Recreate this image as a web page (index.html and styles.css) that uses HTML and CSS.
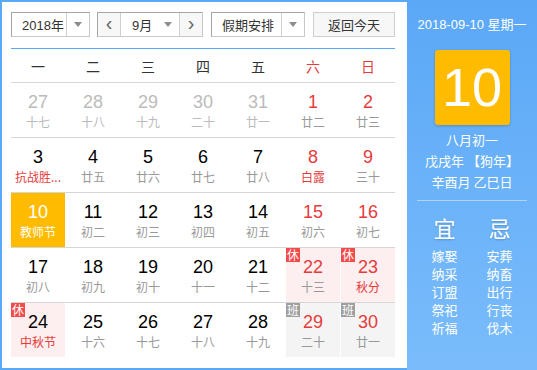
FILE: index.html
```html
<!DOCTYPE html>
<html lang="zh">
<head>
<meta charset="utf-8">
<link rel="stylesheet" href="styles.css">
</head>
<body>
<div class="cal">
  <div class="main">
    <div class="bar">
      <div class="sel sel-year"><span class="sel-text">2018年</span><span class="sel-drop"><i class="tri"></i></span></div>
      <div class="month">
        <span class="arrow">&lsaquo;</span>
        <div class="sel sel-month"><span class="sel-text">9月</span><span class="sel-drop2"><i class="tri"></i></span></div>
        <span class="arrow">&rsaquo;</span>
      </div>
      <div class="sel sel-hol"><span class="sel-text">假期安排</span><span class="sel-drop"><i class="tri"></i></span></div>
      <button class="today">返回今天</button>
    </div>
    <div class="week">
      <span>一</span><span>二</span><span>三</span><span>四</span><span>五</span><span class="red">六</span><span class="red">日</span>
    </div>
    <div class="row">
      <div class="cell other"><b>27</b><i>十七</i></div>
      <div class="cell other"><b>28</b><i>十八</i></div>
      <div class="cell other"><b>29</b><i>十九</i></div>
      <div class="cell other"><b>30</b><i>二十</i></div>
      <div class="cell other"><b>31</b><i>廿一</i></div>
      <div class="cell wk"><b>1</b><i>廿二</i></div>
      <div class="cell wk"><b>2</b><i>廿三</i></div>
    </div>
    <div class="row">
      <div class="cell fest"><b>3</b><i>抗战胜...</i></div>
      <div class="cell"><b>4</b><i>廿五</i></div>
      <div class="cell"><b>5</b><i>廿六</i></div>
      <div class="cell"><b>6</b><i>廿七</i></div>
      <div class="cell"><b>7</b><i>廿八</i></div>
      <div class="cell wk fest"><b>8</b><i>白露</i></div>
      <div class="cell wk"><b>9</b><i>三十</i></div>
    </div>
    <div class="row">
      <div class="cell cur"><b>10</b><i>教师节</i></div>
      <div class="cell"><b>11</b><i>初二</i></div>
      <div class="cell"><b>12</b><i>初三</i></div>
      <div class="cell"><b>13</b><i>初四</i></div>
      <div class="cell"><b>14</b><i>初五</i></div>
      <div class="cell wk"><b>15</b><i>初六</i></div>
      <div class="cell wk"><b>16</b><i>初七</i></div>
    </div>
    <div class="row">
      <div class="cell"><b>17</b><i>初八</i></div>
      <div class="cell"><b>18</b><i>初九</i></div>
      <div class="cell"><b>19</b><i>初十</i></div>
      <div class="cell"><b>20</b><i>十一</i></div>
      <div class="cell"><b>21</b><i>十二</i></div>
      <div class="cell wk rest"><em class="tag">休</em><b>22</b><i>十三</i></div>
      <div class="cell wk rest fest"><em class="tag">休</em><b>23</b><i>秋分</i></div>
    </div>
    <div class="row last">
      <div class="cell rest fest"><em class="tag">休</em><b>24</b><i>中秋节</i></div>
      <div class="cell"><b>25</b><i>十六</i></div>
      <div class="cell"><b>26</b><i>十七</i></div>
      <div class="cell"><b>27</b><i>十八</i></div>
      <div class="cell"><b>28</b><i>十九</i></div>
      <div class="cell wk work"><em class="tag">班</em><b>29</b><i>二十</i></div>
      <div class="cell wk work"><em class="tag">班</em><b>30</b><i>廿一</i></div>
    </div>
  </div>
  <div class="side">
    <div class="side-date">2018-09-10 星期一</div>
    <div class="big">10</div>
    <div class="lunar">
      <div>八月初一</div>
      <div>戊戌年 【狗年】</div>
      <div>辛酉月 乙巳日</div>
    </div>
    <div class="sep"></div>
    <div class="yiji">
      <div class="col">
        <div class="head">宜</div>
        <div>嫁娶</div><div>纳采</div><div>订盟</div><div>祭祀</div><div>祈福</div>
      </div>
      <div class="col">
        <div class="head">忌</div>
        <div>安葬</div><div>纳畜</div><div>出行</div><div>行丧</div><div>伐木</div>
      </div>
    </div>
  </div>
</div>
</body>
</html>
```

FILE: styles.css
```css
* { box-sizing: border-box; }
html, body { margin: 0; padding: 0; background: #fff; }
body { font-family: "Liberation Sans", Arial, "Noto Sans CJK SC", sans-serif; }

.cal {
  width: 537px;
  height: 370px;
  display: flex;
  background: #5aa9f6;
}

.main {
  width: 405px;
  height: 366px;
  margin: 2px 0 2px 2px;
  background: #fff;
  padding: 10px 12px 0 9px;
}

.bar {
  display: flex;
  height: 25px;
  align-items: stretch;
  margin-bottom: 11px;
  font-size: 13px;
  color: #333;
}

.sel {
  display: flex;
  border: 1px solid #c8c8c8;
  border-top-color: #a5a5a5;
  border-left-color: #a5a5a5;
  background: #fff;
}
.sel-text { display: flex; align-items: center; padding-left: 10px; flex: 1; }
.sel-drop {
  width: 23px;
  border-left: 1px solid #d0d0d0;
  display: flex;
  align-items: center;
  justify-content: center;
}
.sel-drop2 {
  width: 22px;
  display: flex;
  align-items: center;
  justify-content: center;
}
.tri {
  width: 0; height: 0;
  border-left: 4px solid transparent;
  border-right: 4px solid transparent;
  border-top: 5px solid #8c8c8c;
}
.sel-year { width: 80px; }

.month {
  display: flex;
  margin-left: 7px;
  border: 1px solid #c8c8c8;
  border-top-color: #a5a5a5;
  border-left-color: #a5a5a5;
}
.arrow {
  width: 22px;
  background: #f7f7f7;
  display: flex;
  align-items: center;
  justify-content: center;
  font-size: 20px;
  color: #666;
  line-height: 1;
  padding-bottom: 3px;
}
.sel-month {
  width: 60px;
  border: none;
  border-left: 1px solid #d0d0d0;
  border-right: 1px solid #d0d0d0;
}
.sel-month .sel-text { padding-left: 11px; }
.sel-hol { width: 95px; margin-left: 8px; }
.sel-hol .sel-text { padding-left: 10px; }

.today {
  margin-left: 8px;
  width: 83px;
  border: 1px solid #cfcfcf;
  background: #f7f7f7;
  font: inherit;
  font-size: 13px;
  color: #333;
  padding: 0;
}

.week {
  border-top: 1px solid #5aa9f6;
  border-bottom: 1px solid #d6d6d6;
  height: 35px;
  display: grid;
  grid-template-columns: repeat(7, 54px);
  column-gap: 1px;
  align-items: center;
  font-size: 14px;
  color: #333;
  font-family: "Noto Sans CJK SC", sans-serif;
}
.week span { text-align: center; }
.week .red { color: #e63b3b; }

.row {
  display: grid;
  grid-template-columns: repeat(7, 54px);
  column-gap: 1px;
  height: 55px;
  border-bottom: 1px solid #d6d6d6;
}
.row.last { border-bottom: none; }

.cell {
  position: relative;
  display: flex;
  flex-direction: column;
  align-items: center;
  padding-top: 9px;
  height: 54px;
}
.cell b {
  font-weight: normal;
  font-size: 18px;
  line-height: 20px;
  color: #000;
}
.cell i {
  font-style: normal;
  font-size: 12px;
  line-height: 16px;
  margin-top: 2px;
  color: #999;
  font-family: "Noto Sans CJK SC", sans-serif;
  white-space: nowrap;
}
.cell.other b, .cell.other i { color: #bbb; }
.cell.wk b { color: #e63b3b; }
.cell.fest i { color: #e63b3b; }
.cell.cur { background: #ffbb00; }
.cell.cur b, .cell.cur i { color: #fff; }
.cell.rest { background: #fdefef; }
.cell.work { background: #f4f4f4; }

.tag {
  position: absolute;
  left: 0;
  top: 0;
  width: 14px;
  height: 14px;
  font-style: normal;
  font-size: 12px;
  line-height: 14px;
  text-align: center;
  color: #fff;
  background: #f34a4a;
  font-family: "Noto Sans CJK SC", sans-serif;
}
.work .tag { background: #9e9e9e; }

.side {
  flex: 1;
  height: 370px;
  background: linear-gradient(#5ba8f7, #7abcfb);
  color: #fff;
  display: flex;
  flex-direction: column;
  align-items: center;
  padding-top: 15px;
}
.side-date {
  font-size: 13px;
  line-height: 20px;
}
.big {
  margin-top: 15px;
  width: 75px;
  height: 75px;
  border-radius: 3px;
  background: #ffbb00;
  box-shadow: 0 1px 3px rgba(0,0,0,.2);
  font-size: 54px;
  line-height: 75px;
  text-align: center;
}
.lunar {
  margin-top: 4px;
  font-size: 13px;
  line-height: 21px;
  text-align: center;
  font-family: "Noto Sans CJK SC", sans-serif;
}
.sep {
  margin-top: 8px;
  width: 110px;
  height: 1px;
  background: rgba(255,255,255,.45);
}
.yiji {
  margin-top: 13px;
  display: grid;
  grid-template-columns: 55px 55px;
  font-family: "Noto Sans CJK SC", sans-serif;
  font-size: 13px;
  line-height: 18px;
  text-align: center;
}
.yiji .head {
  font-size: 22px;
  line-height: 26px;
  margin-bottom: 7px;
  text-shadow: 0 1px 2px rgba(0,0,0,.2);
}
```
